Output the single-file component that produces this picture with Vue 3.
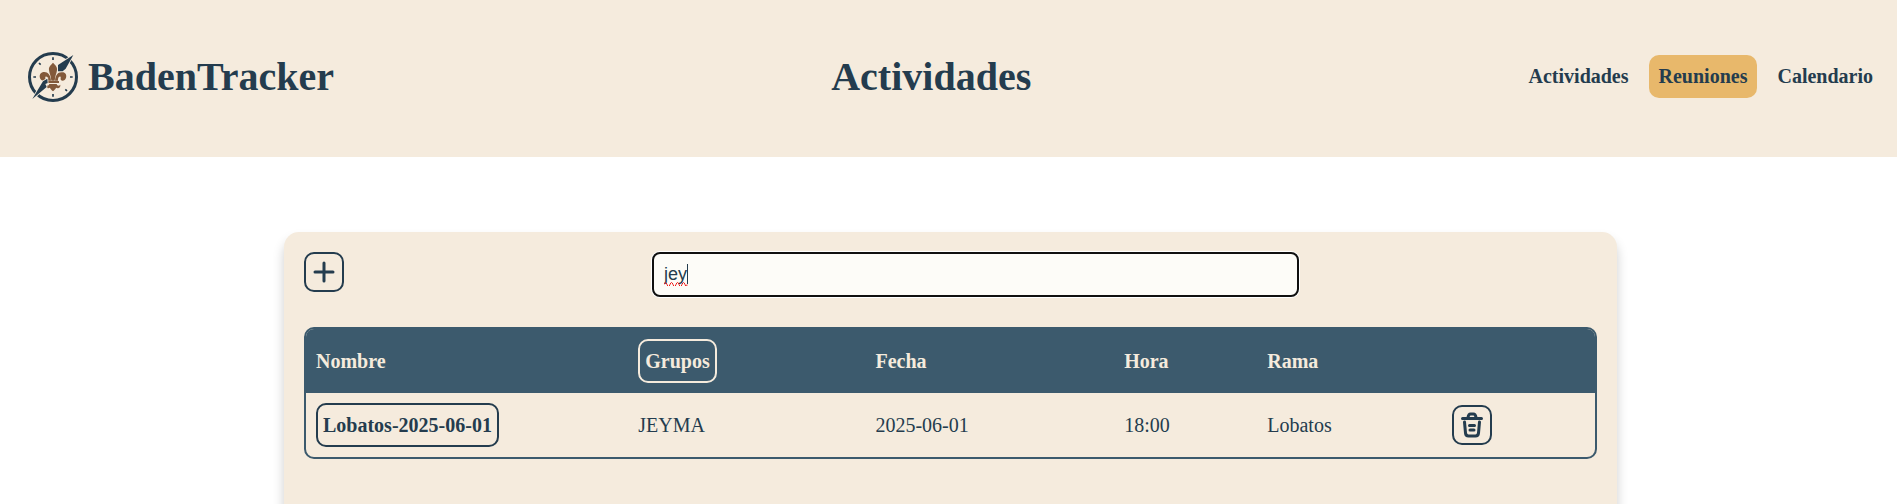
<script setup>
import { ref } from 'vue'

const links = [
  { label: 'Actividades', active: false },
  { label: 'Reuniones', active: true },
  { label: 'Calendario', active: false }
]
const search = ref('jey')
const meetings = [
  { name: 'Lobatos-2025-06-01', group: 'JEYMA', date: '2025-06-01', time: '18:00', branch: 'Lobatos' }
]
</script>

<template>
  <div class="page">
    <header class="topbar">
      <a class="brand" href="#">
        <svg class="logo" viewBox="0 0 150 150" aria-hidden="true">
          <circle cx="75" cy="75" r="70.5" fill="none" stroke="#243c4e" stroke-width="9" />
          <g stroke="#243c4e" stroke-width="5">
            <path d="M75 16v8M75 126v8M16 75h8M126 75h8M33 33l5 5M112 112l5 5" />
          </g>
          <g fill="#83593a">
            <path d="M75 32C65 42 62 46 63 54C64 64 69 72 70 86H80C81 72 86 64 87 54C88 46 85 42 75 32Z" />
            <path d="M69 86C68 68 58 58 46 60C34 62 32 76 40 84C46 89 54 86 52 78C51 73 55 72 58 76C60 79 60 82 60 86Z" />
            <path d="M81 86C82 68 92 58 104 60C116 62 118 76 110 84C104 89 96 86 98 78C99 73 95 72 92 76C90 79 90 82 90 86Z" />
            <path d="M57 87H93V93H57Z" />
            <path d="M64 96H86C88 101 92 103 97 98C98 106 92 111 84 107C83 111 79 114 75 118C71 114 67 111 66 107C58 111 52 106 53 98C58 103 62 101 64 96Z" />
          </g>
          <g fill="#243c4e" stroke="#f5ebdd" stroke-width="5" paint-order="stroke">
            <path d="M136 9L90 39V58H104L113 50Z" />
            <path d="M13 141L56 105L52 96L59 93L58 80L45 88Z" />
          </g>
        </svg>
        <span>BadenTracker</span>
      </a>
      <h1>Actividades</h1>
      <nav>
        <a v-for="link in links" :key="link.label" href="#" :class="{ active: link.active }">{{ link.label }}</a>
      </nav>
    </header>

    <main>
      <section class="card">
        <div class="toolbar">
          <button class="icon-btn" type="button" aria-label="Añadir">
            <svg viewBox="0 0 36 36" fill="none" stroke="#243c4e" stroke-width="3" stroke-linecap="round">
              <path d="M18 9v18M9 18h18" />
            </svg>
          </button>
          <div class="search">
            <input v-model="search" type="text" aria-label="Buscar" spellcheck="false" />
            <svg class="marks" viewBox="0 0 24 22" aria-hidden="true">
              <path d="M0 20.500q1.500-4 3 0t3 0t3 0t3 0t3 0t3 0t3 0t2 0" fill="none" stroke="#f01818" />
              <path d="M23.500 0v20" stroke="#243c4e" />
            </svg>
          </div>
        </div>

        <table>
          <colgroup>
            <col class="c-name" />
            <col class="c-group" />
            <col class="c-date" />
            <col class="c-time" />
            <col class="c-branch" />
            <col />
          </colgroup>
          <thead>
            <tr>
              <th>Nombre</th>
              <th><button class="text-btn" type="button">Grupos</button></th>
              <th>Fecha</th>
              <th>Hora</th>
              <th>Rama</th>
              <th></th>
            </tr>
          </thead>
          <tbody>
            <tr v-for="m in meetings" :key="m.name">
              <td><button class="text-btn" type="button">{{ m.name }}</button></td>
              <td>{{ m.group }}</td>
              <td>{{ m.date }}</td>
              <td>{{ m.time }}</td>
              <td>{{ m.branch }}</td>
              <td>
                <button class="icon-btn" type="button" aria-label="Eliminar">
                  <svg viewBox="0 0 36 36" fill="none" stroke="#243c4e" stroke-width="3" stroke-linecap="round" stroke-linejoin="round">
                    <path d="M8.500 11.500h19M14 10.500q.5-3.500 2.500-3.500h3q2 0 2.500 3.500M10.500 15l1 11q.3 3 3 3h7q2.700 0 3-3l1-11M15.500 18.500h5M16 23h4" />
                  </svg>
                </button>
              </td>
            </tr>
          </tbody>
        </table>
      </section>
    </main>
  </div>
</template>

<style>
body {
  margin: 0;
  background: #ffffff;
}
</style>

<style scoped>
.page {
  height: 100vh;
  overflow: hidden;
  color: #243c4e;
  font-family: "Liberation Serif", "Times New Roman", serif;
  font-size: 20px;
  line-height: 24px;
}
.topbar {
  display: flex;
  align-items: center;
  justify-content: space-between;
  box-sizing: border-box;
  height: 157px;
  padding: 0 14px 4px 18px;
  background: #f5ebdd;
}
.brand {
  display: flex;
  align-items: center;
  gap: 10px;
  padding: 0 10px;
  color: inherit;
  font-size: 40px;
  font-weight: 700;
  line-height: 49px;
  text-decoration: none;
}
.logo {
  width: 50px;
  height: 50px;
}
h1 {
  margin: 0;
  font-size: 40px;
  line-height: 49px;
}
nav {
  display: flex;
  gap: 10px;
}
nav a {
  padding: 10px;
  border-radius: 10px;
  color: inherit;
  font-weight: 700;
  line-height: 23px;
  text-decoration: none;
}
nav a.active {
  background: #e8b86b;
}
main {
  display: grid;
  grid-template-columns: 284fr 1333fr 280fr;
  padding-top: 75px;
}
.card {
  grid-column: 2;
  box-sizing: border-box;
  min-height: 600px;
  padding: 20px;
  border-radius: 15px;
  background: #f5ebdd;
  box-shadow: 0 8px 12px rgba(0, 0, 0, 0.2);
}
.toolbar {
  display: grid;
  grid-template-columns: 348fr 647fr 298fr;
  align-items: start;
  margin-bottom: 30px;
}
button {
  box-sizing: border-box;
  border: 2px solid currentColor;
  border-radius: 10px;
  background: transparent;
  color: inherit;
  font: inherit;
  font-weight: 700;
}
.icon-btn {
  display: block;
  width: 40px;
  height: 40px;
  padding: 0;
}
.icon-btn svg {
  display: block;
  width: 36px;
  height: 36px;
}
.text-btn {
  display: block;
  padding: 8px 5px;
}
.search {
  position: relative;
}
input {
  display: block;
  box-sizing: border-box;
  width: 100%;
  height: 45px;
  padding: 0 10px;
  border: 2px solid #101010;
  border-radius: 8px;
  outline: none;
  background: #fdfcf8;
  box-shadow: 0 0 0 1px #ffffff;
  color: #243c4e;
  font-family: "Liberation Sans", Arial, sans-serif;
  font-size: 18px;
}
.marks {
  position: absolute;
  top: 12px;
  left: 12px;
  width: 24px;
  height: 22px;
}
table {
  width: 100%;
  table-layout: fixed;
  border: 2px solid #3c5a6d;
  border-radius: 10px;
  border-spacing: 0;
  overflow: hidden;
}
.c-name {
  width: 25%;
}
.c-group {
  width: 18.4%;
}
.c-date {
  width: 19.3%;
}
.c-time {
  width: 11.1%;
}
.c-branch {
  width: 14.3%;
}
th,
td {
  height: 44px;
  padding: 10px;
  text-align: left;
  vertical-align: middle;
}
th {
  background: #3c5a6d;
  color: #f5ebdd;
}
</style>
